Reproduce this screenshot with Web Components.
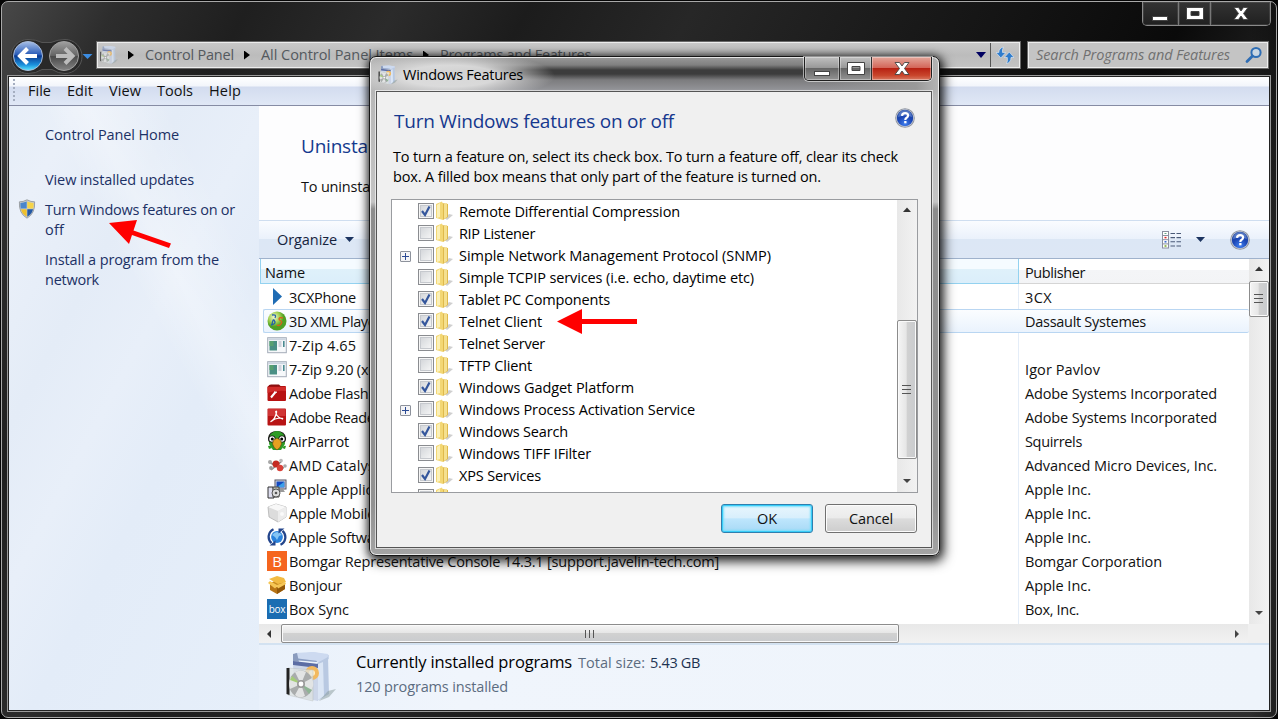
<!DOCTYPE html>
<html lang="en">
<head>
<meta charset="utf-8">
<title>Programs and Features</title>
<style>
html,body{margin:0;padding:0;width:1278px;height:719px;overflow:hidden;background:#050505}
body{font:14.5px/20px "Open Sans","Noto Sans",sans-serif;color:#111}
</style>
</head>
<body>
<win-desktop></win-desktop>
<script>
const def=(name,html,init)=>customElements.define(name,class extends HTMLElement{
  connectedCallback(){
    if(this.shadowRoot)return;
    this.attachShadow({mode:'open'});
    this.shadowRoot.innerHTML=typeof html==='function'?html(this):html;
    if(init)init(this,this.shadowRoot);
  }
});

/* Text whose tracking is adjusted to a given advance width */
def('fit-text','<style>:host{display:inline-block;white-space:pre;letter-spacing:-.2px}</style><span><slot></slot></span>',(el,sr)=>{
  const w=parseFloat(el.getAttribute('w'));if(!w)return;
  const s=sr.querySelector('span');s.style.letterSpacing='0';
  const n=s.getBoundingClientRect().width,c=el.textContent.length;
  s.style.letterSpacing=((w-n)/c)+'px';
});

const box=`<path d="M11 5 31 2l16 3v4l-8 3-27-2z" fill="#c9d6ec"/><path d="m12 6 20-2 3 8-23-2z" fill="#8a9dc2"/><path d="m13 3 18-1 15 2-2 8-32-4z" fill="#cddaf0"/><path d="m11 4 4-1 2 9-6 3z" fill="#8a9bbd"/><path d="m35 13 11-6 1 37-12 7z" fill="#b9c9e2"/><path d="m36 14 5-2 1 34-6 4z" fill="#dbe6f5"/><path d="m11 11 25 3v37L12 46z" fill="#ccd6e9"/><path d="m11 11 25 3v4L11 15z" fill="#5c6da4"/><circle cx="30" cy="23" r="7" fill="#f2b95e"/><circle cx="30" cy="23" r="3" fill="#fff0c8"/><path d="m46 41 8-2-7 8-10 4z" fill="#899" opacity=".5"/><path d="m6 18 25 2v31L6 45z" fill="#dfe4e2" opacity=".75" stroke="#b8bcbc" stroke-width=".6"/><path d="M4.500 18h3v27l-3-1z" fill="#222"/><ellipse cx="19" cy="34" rx="12" ry="13.500" fill="#a9acac"/><path d="M19 34 13 22q6-3 11 0zM19 34l11-6q3 7-1 13zM19 34l4 12q-6 3-10-1zM19 34 8 39q-2-7 1-12z" fill="#e2e4e4"/><path d="m19 34-9-8-2 4z" fill="#a4cc78"/><path d="m19 34 8 10 3-4z" fill="#8eb494"/><circle cx="19" cy="34" r="4" fill="#999"/><circle cx="19" cy="34" r="2.400" fill="#fff"/>`;
const icons={
box:['4 1 50 52',box],
help:['0 0 20 20',`<defs><radialGradient id="g" cx=".5" cy=".85" r=".8"><stop offset="0" stop-color="#3f7ff0"/><stop offset=".55" stop-color="#1b46b4"/><stop offset="1" stop-color="#24489c"/></radialGradient></defs><circle cx="10" cy="10" r="9.800" fill="#8d939e"/><circle cx="10" cy="10" r="9" fill="#c5cad6"/><circle cx="10" cy="10" r="8.200" fill="url(#g)"/><path d="M3 9a7 7 0 0 1 14 0q-7-3-14 0z" fill="#8fb0ee" opacity=".45"/><path d="M7 7.800q.2-2.700 3.100-2.700 3 0 3 2.500 0 1.300-1.500 2.200-1.300.8-1.300 2.200" fill="none" stroke="#fff" stroke-width="2.200"/><rect x="9.200" y="13" width="2.300" height="2.300" fill="#fff"/>`],
shield:['0 0 18 20',`<path d="M9 .8q4 2.200 7.600 2 .8 11.700-7.600 16.400Q.6 14.500 1.400 2.800 5 3 9 .8z" fill="#c8ccd0" stroke="#8d9296" stroke-width=".8"/><path d="M8.700 2.600v7H2.700q-.4-2.500-.3-5.500 3-.1 6.300-1.500z" fill="#4a86cc"/><path d="M9.300 2.600v7h6q.4-2.500.3-5.500-3-.1-6.300-1.500z" fill="#f6d448"/><path d="M8.700 10.200v7.500q-4.500-2.700-5.800-7.500z" fill="#eec02c"/><path d="M9.300 10.200v7.500q4.500-2.700 5.800-7.500z" fill="#2258a4"/>`],
search:['0 0 18 18',`<circle cx="11" cy="6.500" r="4.600" fill="#c9d6e2" stroke="#2e6db4" stroke-width="2"/><path d="m7.500 10-5.500 5.500" stroke="#2e6db4" stroke-width="2.800" stroke-linecap="round"/>`],
refresh:['0 0 18 18',`<g stroke="#e8f0f8" stroke-width=".6"><path d="M7.500 1Q3 2 2.800 6.500H0L4.800 12l5-5.500H6.500Q6 3.500 7.500 1z" fill="#2f7ccc"/><path d="M10.500 17.500q4.500-1 4.500-6H18L13.300 6l-5 5.500h3Q12 15 10.500 17.500z" fill="#2f7ccc"/></g>`],
views:['0 0 20 18',`<rect x=".5" y=".5" width="6" height="16.500" fill="#fff" stroke="#8a8f9e"/><path d="M1 4.500h5M1 8.700h5M1 12.900h5" stroke="#8a8f9e"/><path d="M2.500 2.500h2" stroke="#6a8"/><path d="M2.500 6.600h2" stroke="#d22" stroke-width="1.500"/><path d="M2.500 10.800h2" stroke="#36c" stroke-width="1.500"/><path d="M2.500 15h2" stroke="#7a2" stroke-width="1.500"/><path d="M8.500 2.500H13M14.500 2.500H19M8.500 6.600H13M14.500 6.600H19M8.500 10.800H13M14.500 10.800H19M8.500 15H13M14.500 15H19" stroke="#4a5a78" stroke-width="1.100"/>`],
cx:['0 0 20 20','<path d="M6 1v17l9-8.500z" fill="#1f6cb4"/>'],
xml:['0 0 20 20','<defs><radialGradient id="g" cx=".35" cy=".3"><stop offset="0" stop-color="#f4f8d8"/><stop offset=".6" stop-color="#a0cf50"/><stop offset="1" stop-color="#4fa024"/></radialGradient></defs><circle cx="10" cy="10" r="9.500" fill="url(#g)"/><path d="M5 4q5-1 3 3M4 14q6-1 3-5-1-1-2 4" stroke="#2560a8" stroke-width="1.300" fill="none"/><path d="M16 7q-4-1-4 1 0 1 2 2t-1 4q-2 1-3 0" stroke="#d8601c" stroke-width="1.300" fill="none"/>'],
exe:['0 0 20 20','<rect x=".7" y="2.700" width="18.600" height="15" fill="#f6f8fa" stroke="#a4acb8"/><rect x="1.200" y="3.200" width="17.600" height="2" fill="#cdd5e0"/><rect x="2.500" y="6" width="7.500" height="9.500" fill="#4a8f84"/><rect x="2.500" y="6" width="4" height="5" fill="#58a070"/><path d="M11.500 7h3M11.500 9h3M11.500 11h3" stroke="#aab"/><rect x="16" y="6" width="1.600" height="6" fill="#4a8a90"/>'],
flash:['0 0 20 20','<rect x=".5" y="3" width="18.500" height="15" rx="1" fill="#b81212"/><path d="M1 3.500Q2 1 5 1.500h7l2 2z" fill="#8a1010"/><path d="M.5 10q8-3 18.500-2V4H.5z" fill="#d02c2a"/><path d="M4 14.500 8.500 9" stroke="#fff" stroke-width="2" fill="none"/><path d="M7 9.200h3" stroke="#fff" stroke-width="1.200"/>'],
reader:['0 0 20 20','<rect x=".5" y="1.500" width="18.500" height="17" rx="1" fill="#b81414"/><rect x="1" y="2" width="17.500" height="7" fill="#d03434"/><path d="M4 14.500q4-2 5.500-9 .5-2-.8-1 .2 5.500 6.800 7.500 1-1-3-1-5 .5-8 3-1 1-.5.500z" stroke="#fff" stroke-width="1.200" fill="none"/>'],
parrot:['0 0 20 20','<path d="M1 7q1-7 9-7t9 7q0 4-3 6H4Q1 11 1 7z" fill="#1d1d18"/><path d="M3 4q7-8 14 0l1 9-4 6H6l-4-6z" fill="#2f9c26"/><path d="M1 15q3-1 4 2l-3 1zM15 17q2-3 4-2l-1 3z" fill="#2f9c26"/><circle cx="5" cy="8" r="3.600" fill="#111"/><circle cx="15" cy="8" r="3.600" fill="#111"/><circle cx="5" cy="8" r="2.700" fill="#fff"/><circle cx="15" cy="8" r="2.700" fill="#fff"/><circle cx="5.300" cy="8" r="1.500"/><circle cx="14.700" cy="8" r="1.500"/><path d="M10 7q5 2 4.500 6-1 4-4.500 6-3.500-2-4.500-6Q5 9 10 7z" fill="#e8a020" stroke="#5a4010" stroke-width=".6"/>'],
amd:['0 0 20 20','<path d="m2 7 7 4 6-5M9 11l8 2M9 11l-5 4" stroke="#888" stroke-width="1.500" fill="none"/><circle cx="9" cy="9" r="3.500" fill="#c42a22"/><circle cx="13" cy="13" r="3.200" fill="#d84038"/><circle cx="3" cy="7" r="2" fill="#a8a8a8"/><circle cx="14" cy="5.500" r="1.800" fill="#bbb"/><circle cx="4" cy="13" r="1.900" fill="#999"/><circle cx="18" cy="11" r="1.800" fill="#aaa"/>'],
msi:['0 0 20 20','<rect x="8" y="1" width="11" height="9" fill="#d8dce0" stroke="#556"/><rect x="9.500" y="2.500" width="8" height="6" fill="#1448c0"/><path d="m10 8 7-5v5z" fill="#3ba0e8"/><path d="M11 10h5l2 3h-8z" fill="#999"/><path d="M1 8h5l1 11H1z" fill="#dde" stroke="#333"/><path d="M6 8h6v10H6z" fill="#b8bdb0" stroke="#444"/><circle cx="9" cy="14" r="4" fill="#ddd" stroke="#555"/><circle cx="9" cy="14" r="1.300" fill="#555"/>'],
cube:['0 0 20 20','<path d="m9 1 10 3v10l-8 5-9-5L1 4z" fill="#dcdcdc" stroke="#aaa" stroke-width=".7"/><path d="m9 1 10 3-8 4L1 4z" fill="#f8f8f8"/><path d="m11 8 8-4v10l-8 5z" fill="#ececec"/><circle cx="15" cy="11" r="2" fill="#fafafa"/>'],
update:['0 0 20 20','<circle cx="10" cy="10" r="5.900" fill="#2a82dc"/><path d="M5 8q5-6 10 0l-3 1-2 4-2-3z" fill="#84c4f4"/><path d="M6.500 2.200a8.500 8.500 0 0 0-2 14M13.500 17.800a8.500 8.500 0 0 0 2-14" stroke="#23458c" stroke-width="2.300" fill="none"/><path d="M2.500 18.500h6v-5zM17.500 1.500h-6v5z" fill="#23458c"/>'],
bonjour:['0 0 20 20','<path d="m3 9 7 3 8-3v5l-8 5-7-4z" fill="#b87414"/><path d="m10 12 8-3v5l-8 5z" fill="#935708"/><path d="m3 8 7-3 8 3-8 3z" fill="#c88a20"/><path d="m2 4 8-3 7 2 2 4-8 2z" fill="#f2bb42"/><path d="m1 8 2-2 7 4 8-3 1 2-8 4.500-1-2-2 2z" fill="#f6c654"/>'],
};
def('win-icon',el=>{const [v,p]=icons[el.getAttribute('name')];const w=el.getAttribute('w')||20,h=el.getAttribute('h')||w;
 return `<style>:host{display:block;flex:none;width:${w}px;height:${h}px}svg{display:block}</style><svg width="${w}" height="${h}" viewBox="${v}">${p}</svg>`});

def('app-badge',el=>`<style>:host{display:flex;flex:none;width:20px;height:20px;align-items:center;justify-content:center;background:${el.getAttribute('bg')};color:#fff;font-size:${el.getAttribute('size')};line-height:20px;letter-spacing:-.3px}</style><slot></slot>`);

/* Caption buttons */
def('caption-buttons',el=>{const d=el.hasAttribute('dialog');
const ws=d?[35,33,59]:[36,33,59];
return `<style>
:host{display:flex;box-sizing:border-box;height:24px;border:1px solid ${d?'#1f1f1f':'#8a8a8a'};border-top:0;border-radius:0 0 5px 5px;overflow:hidden;box-shadow:${d?'0 0 0 1px rgba(255,255,255,.55)':'inset 0 0 0 1px #333'}}
span{display:flex;align-items:center;justify-content:center;box-sizing:border-box;border-right:1px solid ${d?'#303030':'#777'};
background:${d?'linear-gradient(#c0c0c0,#999 46%,#666 50%,#949494)':'linear-gradient(#333,#202020)'};box-shadow:inset 0 0 0 1px rgba(255,255,255,${d?.35:.1})}
span:last-child{border:0;${d?'background:linear-gradient(#e3a79b,#d4675a 46%,#b72213 50%,#c9452c 80%,#d97a62)':''}}
svg{display:block}</style>
<span style="width:${ws[0]}px"><svg width="18" height="20"><rect x="1.500" y="12.500" width="15" height="4" fill="#fff" stroke="#444"/></svg></span>
<span style="width:${ws[1]}px"><svg width="20" height="18"><path d="M1.500 2.500h17v12h-17zM6 6.500h8v4H6z" fill="#fff" fill-rule="evenodd" stroke="#444"/></svg></span>
<span style="width:${ws[2]}px"><svg width="18" height="18"><path d="M2 2.500h4.500L9 6l2.500-3.500H16l-4.500 6L16 14.500h-4.500L9 11l-2.500 3.500H2l4.500-6z" fill="#fff" stroke="#444" stroke-width=".9"/></svg></span>`});

/* Scroll bar, either orientation */
def('scroll-bar',el=>{const h=el.hasAttribute('horizontal'),a=el.getAttribute('before'),t=el.getAttribute('thumb');
const dir=h?'row':'column',g=h?'to bottom':'to right',sz=h?'width':'height';
return `<style>:host{display:flex;flex:none;flex-direction:${dir};background:linear-gradient(${g},#e8e8e8,#f2f2f2)}
.a{flex:none;${sz}:20px;display:flex;align-items:center;justify-content:center}
.b{flex:none;${sz}:${a}px}.t{flex:none;${sz}:${t}px;box-sizing:border-box;border:1px solid #8c8c8c;border-radius:2px;box-shadow:inset 0 0 0 1px #fafafa;background:linear-gradient(${g},#f5f5f5,#e6e6e6 46%,#d1d1d1 50%,#c9cbce);display:flex;align-items:center;justify-content:center}
.r{flex:1}</style><div class="a"><svg width="10" height="10"><path d="${h?'M7 1v8L3 5z':'M1 7h8L5 2.500z'}" fill="#333"/></svg></div><div class="b"></div><div class="t"><svg width="12" height="12"><path d="${h?'M1.500 2v8M5.500 2v8M9.500 2v8':'M1 1.500h9M1 5.500h9M1 9.500h9'}" stroke="#555"/></svg></div><div class="r"></div><div class="a"><svg width="10" height="10"><path d="${h?'M2 1v8l4-4z':'M1 2h8L5 6z'}" fill="#444"/></svg></div>`});

/* Navigation area with back and forward */
def('nav-buttons',`<style>:host{display:block;width:84px;height:38px}svg{display:block}</style>
<svg width="84" height="38"><defs><linearGradient id="b" x2="0" y2="1"><stop offset="0" stop-color="#a8c0e8"/><stop offset=".45" stop-color="#2a5cb8"/><stop offset=".5" stop-color="#0a3890"/><stop offset=".8" stop-color="#1b90dc"/><stop offset="1" stop-color="#5ce8ff"/></linearGradient><linearGradient id="f" x2="0" y2="1"><stop offset="0" stop-color="#a0a0a0"/><stop offset=".48" stop-color="#666"/><stop offset=".52" stop-color="#4a4a4a"/><stop offset="1" stop-color="#858585"/></linearGradient></defs>
<path d="M17 1.500q8 0 14 3h9q7-3 14-3a17 17 0 0 1 0 34q-7 0-13-4H31q-6 4-14 4a17 17 0 0 1 0-34z" fill="#292929" stroke="#555"/>
<circle cx="17" cy="18" r="14.500" fill="url(#b)" stroke="#a9bbd8"/><path d="M16.500 10.500 9 18l7.500 7.500M10 18h16" stroke="#fff" stroke-width="4" fill="none"/>
<circle cx="53" cy="18" r="14.500" fill="url(#f)" stroke="#a0a0a0"/><path d="m54 10.500 7.500 7.500-7.500 7.500M60 18H45" stroke="#bcbcbc" stroke-width="4" fill="none"/>
<path d="M71.500 16h10l-5 5z" fill="#3c8ce0"/></svg>`);

def('address-bar',`<style>:host{display:flex;box-sizing:border-box;width:925px;height:28px;border:1px solid #686868;box-shadow:inset 0 0 0 1px #ededed;background:linear-gradient(#c9c9c9,#bcbcbc 50%,#c4c4c4);align-items:center;color:#54595e;padding-left:3px}
.ar{width:6px;height:9px;background:#000;clip-path:polygon(0 0,100% 50%,0 100%)}
fit-text{margin:0 10px 0 11px}.dd{margin-left:auto;width:10px;height:6px;background:#000060;clip-path:polygon(0 0,100% 0,50% 100%);margin-right:4px}
.rf{height:24px;width:28px;border-left:1px solid #555;display:flex;align-items:center;justify-content:center;margin-right:1px}</style>
<win-icon name="box" w="18" h="20" style="opacity:.75"></win-icon><i class="ar" style="margin-left:10px"></i><fit-text w="89">Control Panel</fit-text><i class="ar"></i><fit-text w="152">All Control Panel Items</fit-text><i class="ar"></i><fit-text w="151">Programs and Features</fit-text><i class="dd"></i><div class="rf"><win-icon name="refresh" w="18"></win-icon></div>`);

def('search-box',`<style>:host{display:flex;box-sizing:border-box;width:242px;height:28px;border:1px solid #686868;box-shadow:inset 0 0 0 1px #ededed;background:#c4c4c4;align-items:center;justify-content:space-between;padding:0 5px 0 8px;font-style:italic;color:#707070}</style><fit-text w="194">Search Programs and Features</fit-text><win-icon name="search" w="18"></win-icon>`);

def('menu-bar',`<style>:host{display:flex;box-sizing:border-box;height:29px;flex:none;padding:4px 0 0 19px;border-bottom:1px solid #868ca4;background:linear-gradient(#fff,#f2f5fb 9px,#d3dcef 10px,#e0e8f6);color:#111;position:relative}
i{position:absolute;left:4px;top:2px;width:2px;height:24px;background:repeating-linear-gradient(#a5aec0 0 2px,transparent 2px 4px)}
fit-text{margin-right:16px}</style><i></i><fit-text w="23">File</fit-text><fit-text w="26">Edit</fit-text><fit-text w="32">View</fit-text><fit-text w="36">Tools</fit-text><fit-text w="32">Help</fit-text>`);

def('task-pane',`<style>:host{display:block;box-sizing:border-box;width:250px;flex:none;padding:19px 0 0 36px;color:#1c3165;
background:linear-gradient(62deg,transparent 62%,rgba(255,255,255,.3) 70%,transparent 84%),linear-gradient(118deg,#e6eef8 0,#eaf0f9 12%,#e4ecf7 30%,#e8eff9 45%,#e3ecf8 60%,#e6effa)}
div{display:flex;flex-direction:column;align-items:flex-start}.l{margin-bottom:10px;position:relative}win-icon{position:absolute;left:-27px;top:-1px}</style>
<div class="l" style="margin-bottom:25px"><fit-text w="134">Control Panel Home</fit-text></div>
<div class="l"><fit-text w="149">View installed updates</fit-text></div>
<div class="l"><win-icon name="shield" w="18" h="20"></win-icon><fit-text w="190">Turn Windows features on or</fit-text><fit-text w="19">off</fit-text></div>
<div class="l"><fit-text w="174">Install a program from the</fit-text><fit-text w="54">network</fit-text></div>`);

def('page-heading',`<style>:host{display:block;box-sizing:border-box;height:115px;flex:none;background:#fdfdfe;border-bottom:1px solid #cfdef0;padding:27px 0 0 42px}
.h{font-size:19px;line-height:26px;color:#143a8e}.p{margin-top:18px}</style><div class="h"><fit-text w="76">Uninstall</fit-text></div><div class="p"><fit-text w="76">To uninstall</fit-text></div>`);

def('command-bar',`<style>:host{display:flex;box-sizing:border-box;height:38px;flex:none;align-items:center;background:linear-gradient(#fafcff,#eaf1fb 49%,#dce7f5 50%,#dde7f5);border-bottom:1px solid #9fb2cc;padding:0 19px 0 18px;color:#16233d}
i{width:9px;height:5px;background:#1c3460;clip-path:polygon(0 0,100% 0,50% 100%)}</style>
<fit-text w="60">Organize</fit-text><i style="margin-left:8px"></i><win-icon name="views" w="20" h="18" style="margin-left:auto"></win-icon><i style="margin:0 25px 0 14px"></i><win-icon name="help" w="20"></win-icon>`);

const rows=[['cx','3CXPhone',67,'3CX',27],['xml','3D XML Player',92,'Dassault Systemes',121],['exe','7-Zip 4.65',67,'',0],['exe','7-Zip 9.20 (x64 edition)',0,'Igor Pavlov',75],['flash','Adobe Flash Player',123,'Adobe Systems Incorporated',192],['reader','Adobe Reader',91,'Adobe Systems Incorporated',192],['parrot','AirParrot',60,'Squirrels',57],['amd','AMD Catalyst',91,'Advanced Micro Devices, Inc.',192],['msi','Apple Application Support',176,'Apple Inc.',66],['cube','Apple Mobile Device Support',190,'Apple Inc.',66],['update','Apple Software Update',151,'Apple Inc.',66],['B','Bomgar Representative Console 14.3.1 [support.javelin-tech.com]',430,'Bomgar Corporation',137],['bonjour','Bonjour',53,'Apple Inc.',66],['box','Box Sync',60,'Box, Inc.',54]];
def('program-list',`<style>:host{display:flex;height:365px;flex:none;background:#fff}
main{flex:1;min-width:0;padding-left:1px;display:grid;grid-template-rows:25px 1px repeat(14,24px);background:linear-gradient(90deg,transparent 759px,#e4edf8 759px 760px,transparent 760px)}
.r{display:grid;grid-template-columns:759px 1fr;align-items:center;box-sizing:border-box}
.r:not(.hd){padding-top:1px}
.hd span{box-sizing:border-box;height:25px;padding:4px 0 0 6px;border-bottom:1px solid #d5d5d5;background:linear-gradient(#fff 45%,#f4f5f7 46%,#f3f4f6)}
.hd span:first-child{padding-left:4px;background:linear-gradient(#f5fbff 40%,#dff1fa 41%,#dbeefa);border:solid #93d2f0;border-width:0 1px 1px}
.n{display:flex;align-items:center;gap:2px;padding-left:7px}.n win-icon,.n app-badge{margin-top:-1px}.p{padding-left:6px}
.r.sel{padding:1px 0 0;margin-left:3px;border:1px solid #b9d6f2;border-right:0;border-radius:2px;background:linear-gradient(#fbfdff,#eaf3fd);grid-template-columns:755px 1fr}.sel .n{padding-left:3px}</style>
<main><div class="r hd"><span><fit-text w="40">Name</fit-text></span><span><fit-text w="60">Publisher</fit-text></span></div><div></div>${rows.map((r,i)=>`<div class="r${i==1?' sel':''}"><div class="n">${r[0]=='B'?'<app-badge bg="#f5651e" size="15px">B</app-badge>':r[0]=='box'?'<app-badge bg="#1b6db2" size="10px">box</app-badge>':`<win-icon name="${r[0]}"></win-icon>`}<fit-text ${r[2]?`w="${r[2]}"`:''}>${r[1]}</fit-text></div><div class="p">${r[3]?`<fit-text w="${r[4]}">${r[3]}</fit-text>`:''}</div></div>`).join('')}</main><scroll-bar before="2" thumb="36" style="width:20px;height:365px"></scroll-bar>`);

def('details-pane',`<style>:host{display:flex;flex:1;box-sizing:border-box;border-top:2px solid #d3e2f1;background:linear-gradient(90deg,#e9f1fb,#f0f5fc 20%,#eef4fb);padding:3px 0 0 22px;color:#5c6c80}
win-icon{margin:3px 0 0 4px}.t{margin-left:19px}.a{display:flex;align-items:baseline;height:27px;margin-top:2px;line-height:24px}.b{line-height:20px}</style>
<win-icon name="box" w="52" h="52"></win-icon><div class="t"><div class="a"><fit-text w="216" style="font-size:16.500px;color:#000;margin-right:6px">Currently installed programs</fit-text><fit-text w="67">Total size:</fit-text><fit-text w="50" style="color:#1e3352;margin-left:5px">5.43 GB</fit-text></div><div class="b"><fit-text w="152">120 programs installed</fit-text></div></div>`);

def('explorer-window',`<style>:host{display:flex;flex-direction:column;box-sizing:border-box;width:1276px;height:717px;border:1px solid #a8a8a8;border-radius:7px;padding:0 6px 5px;
background:linear-gradient(90deg,transparent 98%,rgba(0,0,0,.3)),linear-gradient(118deg,#484848 0,#2d2d2d 7%,#1f1f1f 15%,#2b2b2b 24%,#1c1c1c 32%,#272727 42%,#1a1a1a 55%,#0a0a0a 72%,#303030 85%,#2c2c2c)}
.cap{display:flex;justify-content:flex-end;height:39px;flex:none}.nav{display:flex;height:34px;flex:none;align-items:flex-start;padding-left:3px}
.client{flex:1;min-height:0;border:1px solid #999;box-shadow:inset 0 0 0 1px #222;padding:1px;display:flex;flex-direction:column;margin:0 -1px 0 -1px}
.body{flex:1;display:flex;min-height:0}.content{flex:1;min-width:0;display:flex;flex-direction:column}
.hs{display:flex;flex:none;height:19px;background:#f0f0f0}</style>
<div class="cap"><caption-buttons style="margin-right:-1px;width:129px"></caption-buttons></div>
<div class="nav"><nav-buttons style="margin-top:-3px"></nav-buttons><address-bar style="margin-left:1px"></address-bar><search-box style="margin-left:6px"></search-box></div>
<div class="client"><menu-bar></menu-bar><div class="body"><task-pane></task-pane><div class="content"><page-heading></page-heading><command-bar></command-bar><program-list></program-list><div class="hs"><scroll-bar horizontal before="2" thumb="618" style="width:989px"></scroll-bar></div><details-pane></details-pane></div></div></div>`);

/* One optional component in the tree */
def('feature-row',el=>`<style>:host{display:grid;grid-template-columns:26px 17px 24px auto;height:22px;align-items:center;white-space:nowrap}
.pl{width:9px;height:9px;border:1px solid #8d929c;background:linear-gradient(#2b4a94,#2b4a94) 50%/7px 1px no-repeat,linear-gradient(#2b4a94,#2b4a94) 50%/1px 7px no-repeat,#f4f4f6;border-radius:1px;margin:1px 0 0 8px}
.cb{width:16px;height:16px;box-sizing:border-box;border:1px solid #8a8c90;background:linear-gradient(135deg,#cfd2d6,#fafafa);box-shadow:inset 0 0 0 1px #f6f6f6,inset 0 0 0 2px #c6c9ce;margin-top:-2px}
svg{display:block;margin-top:-2px}.cb svg{margin:0}</style><div>${el.hasAttribute('plus')?'<div class="pl"></div>':''}</div><div class="cb">${el.hasAttribute('on')?'<svg width="14" height="14"><path d="M3 7 6 11 10.500 2.500" fill="none" stroke="#34569c" stroke-width="2.200"/></svg>':''}</div>
<svg width="20" height="20"><path d="m10 17 4-4 4 1-6 5z" fill="#888" opacity=".4"/><path d="m7 2 6 1v13l-5 3z" fill="#dfb94c"/><path d="m9 3 3-1v14l-3 2z" fill="#f5e08e"/><path d="M1 3 7 .500 8 3v16l-7-2z" fill="#f3d774"/><path d="M2 4 5 2v14l-3 1z" fill="#fbf0b8"/></svg><fit-text w="${el.getAttribute('w')}">${el.getAttribute('label')}</fit-text>`);

const feats=[['Remote Differential Compression',221,1],['RIP Listener',76],['Simple Network Management Protocol (SNMP)',312,0,1],['Simple TCPIP services (i.e. echo, daytime etc)',295],['Tablet PC Components',151,1],['Telnet Client',83,1],['Telnet Server',86],['TFTP Client',73],['Windows Gadget Platform',175,1],['Windows Process Activation Service',236,0,1],['Windows Search',109,1],['Windows TIFF IFilter',132],['XPS Services',82,1]];
def('feature-tree',`<style>:host{display:flex;box-sizing:border-box;width:527px;height:294px;border:1px solid #9a9ca0;background:#fff;overflow:hidden}.l{flex:1;padding-top:1px;overflow:hidden;color:#000}</style>
<div class="l">${feats.map(f=>`<feature-row label="${f[0]}" w="${f[1]}"${f[2]?' on':''}${f[3]?' plus':''}></feature-row>`).join('')}<feature-row label="" w="0"></feature-row></div><scroll-bar before="100" thumb="139" style="width:20px"></scroll-bar>`);

def('push-button',el=>{const d=el.hasAttribute('default');return `<style>:host{display:flex;box-sizing:border-box;width:92px;height:29px;align-items:center;justify-content:center;border:1px solid ${d?'#2f7fae':'#707070'};border-radius:3px;color:#111;box-shadow:${d?'inset 0 0 0 1px #38cdf8,inset 0 0 2px 2px #7adffb':'inset 0 0 0 1px #fcfcfc'};background:${d?'linear-gradient(#e9f6fd,#d8effc 48%,#bee6fd 51%,#a7d9f5)':'linear-gradient(#f3f3f3,#ebebeb 48%,#dcdcdc 51%,#cdcdcd)'}}</style><slot></slot>`});

def('features-dialog',`<style>:host{display:flex;flex-direction:column;box-sizing:border-box;width:571px;height:500px;border:1px solid #151515;border-radius:7px;padding:0 7px 7px 6px;
box-shadow:inset 0 0 0 1px rgba(255,255,255,.75),2px 4px 12px 2px rgba(0,0,0,.75),0 0 9px rgba(0,0,0,.6);
background:radial-gradient(ellipse 105px 24px at 80px 19px,rgba(225,225,225,.9) 45%,transparent),linear-gradient(transparent 32px,#b9b9b9 42px,#c4c4c4 145px,#8d8d8d 152px,#929292 90%,#a4a4a4),linear-gradient(90deg,#b5b5b5,transparent 22%,transparent 80%,#999 96%,#b5b5b5),linear-gradient(#9a9a9a,#808080 8px,#3c3c3c 13px,#3c3c3c 17px,#7c7c7e 23px,#9a9ba0 36px)}
.cap{display:flex;height:34px;flex:none;padding-left:2px;color:#000}.cap win-icon{margin:8px 5px 0 0}.cap fit-text{margin-top:8px}
.client{flex:1;box-sizing:border-box;border:1px solid #555;box-shadow:0 0 0 1px rgba(255,255,255,.6);background:#f0f0f0;padding:0 14px}
.h{display:flex;justify-content:space-between;align-items:flex-start;font-size:19px;line-height:28px;color:#15388e;padding:15px 2px 0 3px;height:39px}.h win-icon{margin-top:1px}
.p{padding:1px 2px 0;height:52px;color:#000}.f{display:flex;justify-content:flex-end;gap:12px;margin-top:11px}</style>
<div class="cap"><win-icon name="box" w="20" h="20"></win-icon><fit-text w="120">Windows Features</fit-text><caption-buttons dialog style="margin-left:auto;width:128px"></caption-buttons></div>
<div class="client"><div class="h"><fit-text w="280">Turn Windows features on or off</fit-text><win-icon name="help" w="20"></win-icon></div>
<div class="p"><fit-text w="505">To turn a feature on, select its check box. To turn a feature off, clear its check</fit-text><br><fit-text w="428">box. A filled box means that only part of the feature is turned on.</fit-text></div>
<feature-tree></feature-tree><div class="f"><push-button default>OK</push-button><push-button><fit-text w="44">Cancel</fit-text></push-button></div></div>`);

def('win-desktop',`<style>:host{display:block;width:1278px;height:719px;position:relative;overflow:hidden;background:#050505;box-sizing:border-box;padding:1px 0 0 1px}
features-dialog{position:absolute;left:369px;top:56px}svg{position:absolute;left:0;top:0;pointer-events:none}</style>
<explorer-window></explorer-window><features-dialog></features-dialog>
<svg width="1278" height="719" fill="#f00"><path d="m109 223 28-3-3.500 10.500 37.500 13-2 4.500-37-13-3 9z"/><path d="m557 321.500 25-12.500v10h55v5h-55v10z"/></svg>`);
</script>
</body>
</html>
